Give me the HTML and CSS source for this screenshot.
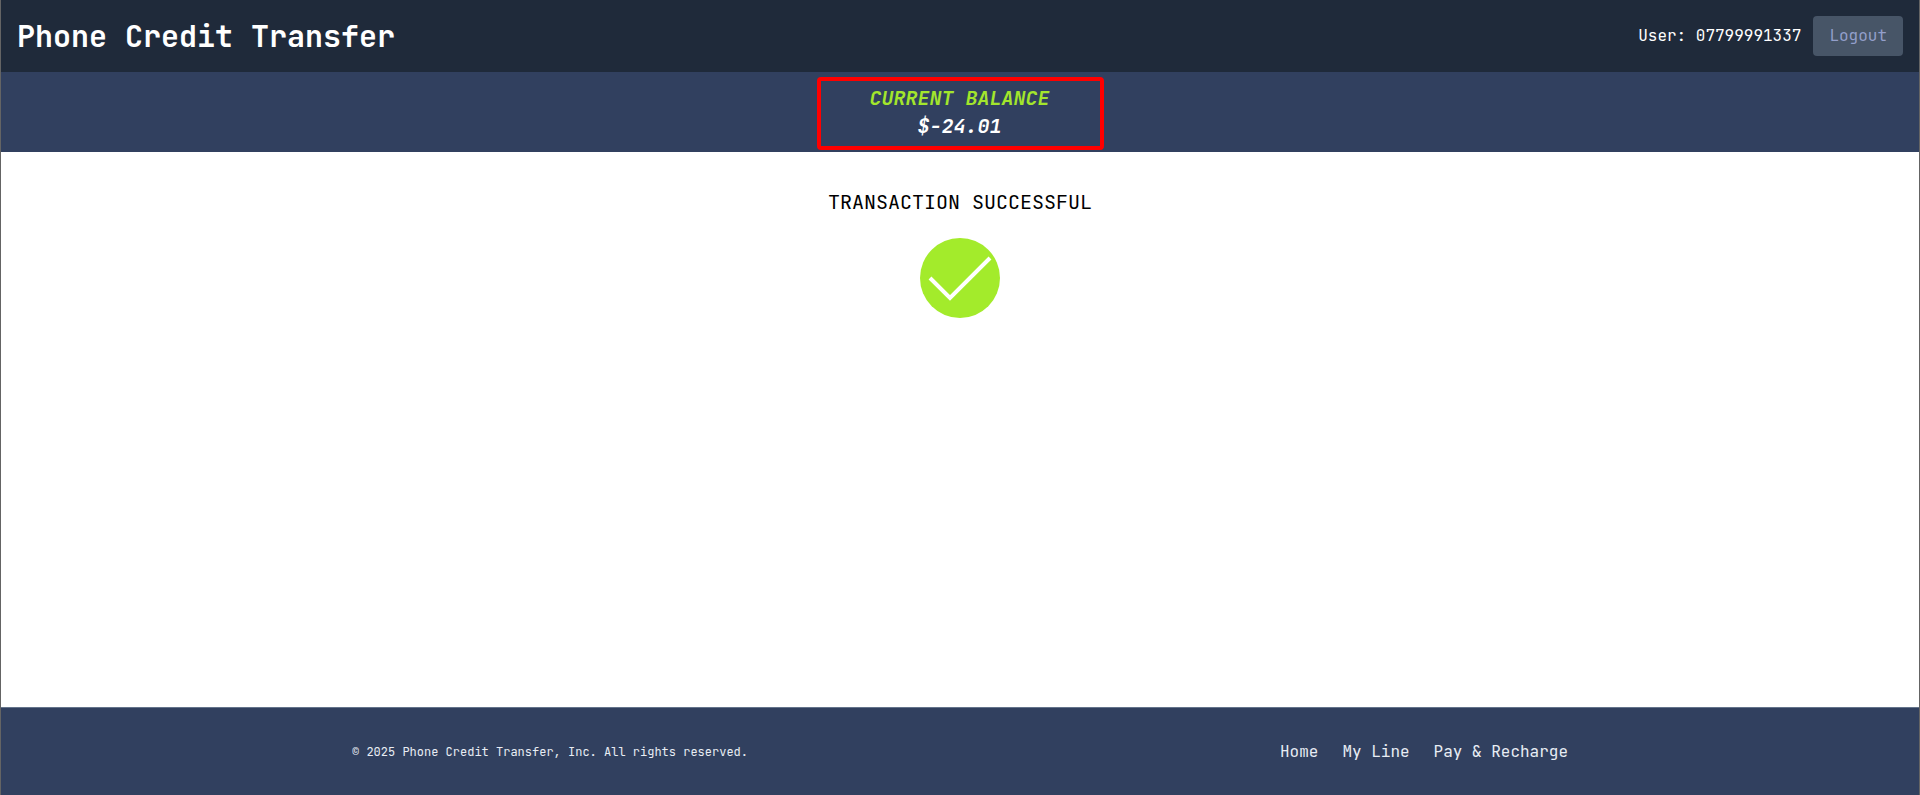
FILE: index.html
```html
<!DOCTYPE html>
<html lang="en">
<head>
<meta charset="utf-8">
<meta name="viewport" content="width=device-width, initial-scale=1">
<title>Phone Credit Transfer</title>
<link rel="stylesheet" href="styles.css">
</head>
<body>
<header class="topbar">
  <h1 class="brand">Phone Credit Transfer</h1>
  <div class="account">
    <span>User: 07799991337</span>
    <button type="button" class="logout">Logout</button>
  </div>
</header>
<section class="balance">
  <div class="balance-box">
    <p class="balance-label">CURRENT BALANCE</p>
    <p class="balance-amount">$-24.01</p>
  </div>
</section>
<main class="content">
  <h2 class="status">TRANSACTION SUCCESSFUL</h2>
  <svg class="check" viewBox="0 0 80 80" aria-hidden="true">
    <circle cx="40" cy="40" r="40" fill="#a3eb2b"/>
    <path d="M10 40L30 60L70 20" fill="none" stroke="#fff" stroke-width="4"/>
  </svg>
</main>
<footer class="footer">
  <div class="footer-inner">
    <p class="copyright">© 2025 Phone Credit Transfer, Inc. All rights reserved.</p>
    <nav class="links">
      <a href="#">Home</a>
      <a href="#">My Line</a>
      <a href="#">Pay &amp; Recharge</a>
    </nav>
  </div>
</footer>
</body>
</html>
```

FILE: styles.css
```css
* {
  box-sizing: border-box;
  margin: 0;
}

body {
  display: flex;
  flex-direction: column;
  min-height: 100vh;
  border: solid #646464;
  border-width: 0 1px;
  background: #fff;
  color: #000;
  font-family: "JetBrains Mono", "DejaVu Sans Mono", monospace;
  font-size: 16px;
  line-height: 24px;
}

.topbar {
  display: flex;
  align-items: center;
  justify-content: space-between;
  padding: 16px;
  background: #1f2a3a;
  color: #fff;
}

.brand {
  font-size: 30px;
  line-height: 36px;
  font-weight: 700;
}

.account {
  display: flex;
  align-items: center;
  gap: 12px;
}

.logout {
  padding: 8px 16px;
  border: 0;
  border-radius: 4px;
  background: #475567;
  color: #939fcb;
  font: inherit;
  cursor: pointer;
}

.balance {
  display: flex;
  justify-content: center;
  padding: 5px 16px 2px;
  background: #31405f;
  text-align: center;
  font-size: 20px;
  line-height: 28px;
  font-style: italic;
  font-weight: 700;
}

.balance-box {
  padding: 3px 50px 6px 49px;
  border: 4px solid #f00;
  border-radius: 4px;
}

.balance-label {
  color: #a3e62c;
}

.balance-amount {
  color: #fff;
}

.content {
  display: flex;
  flex: 1;
  flex-direction: column;
  align-items: center;
  gap: 22px;
  padding: 36px 16px;
}

.status {
  font-size: 20px;
  line-height: 28px;
  font-weight: 400;
}

.check {
  width: 80px;
  height: 80px;
}

.footer {
  border-top: 1px solid #64748b;
  background: #31405f;
  color: #e8edf4;
}

.footer-inner {
  display: flex;
  align-items: center;
  justify-content: space-between;
  max-width: 1280px;
  margin: 0 auto;
  padding: 32px 32px 31px;
}

.copyright {
  font-size: 12px;
}

.links {
  display: flex;
  gap: 24px;
}

.links a {
  color: inherit;
  text-decoration: none;
}
```
